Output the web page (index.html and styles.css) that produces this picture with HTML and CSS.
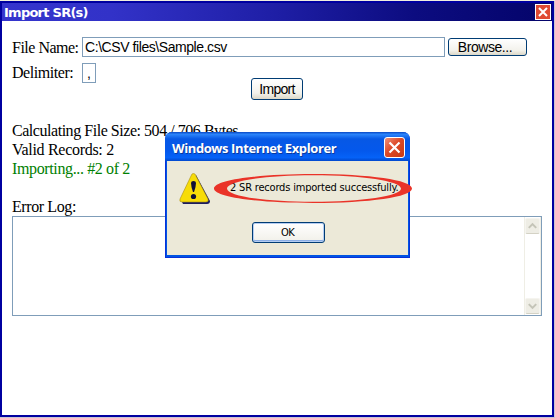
FILE: index.html
```html
<!DOCTYPE html>
<html lang="en">
<head>
<meta charset="utf-8">
<title>Import SR(s)</title>
<link rel="stylesheet" href="styles.css">
</head>
<body>
<main class="window">
  <header class="titlebar">
    <h1 class="title">Import SR(s)</h1>
    <button class="close" aria-label="Close"><svg width="14" height="14" viewBox="0 0 14 14"><path d="M3 3l8 8M11 3l-8 8" stroke="#fff" stroke-width="2"/></svg></button>
  </header>
  <div class="content">
    <div class="row file-row">
      <span class="label"><span class="t-file">File Name:</span></span>
      <div class="field path"><span class="t-path">C:\CSV files\Sample.csv</span></div>
      <button class="btn browse"><span class="t-browse">Browse...</span></button>
    </div>
    <div class="row delimiter-row">
      <span class="label"><span class="t-delim">Delimiter:</span></span>
      <div class="field delimiter">,</div>
      <button class="btn import"><span class="t-import">Import</span></button>
    </div>
    <div class="status">
      <p><span class="t-size">Calculating File Size: 504 / 706 Bytes</span></p>
      <p><span class="t-valid">Valid Records: 2</span></p>
      <p class="progress"><span class="t-progress">Importing... #2 of 2</span></p>
    </div>
    <p class="log-label"><span class="t-log">Error Log:</span></p>
    <div class="log">
      <div class="scrollbar">
        <div class="arrow"><svg width="13" height="14" viewBox="0 0 14 14"><path d="M3 9l4-4 4 4" fill="none" stroke="#c4c4b8" stroke-width="2.2"/></svg></div>
        <div class="arrow"><svg width="13" height="14" viewBox="0 0 14 14"><path d="M3 5l4 4 4-4" fill="none" stroke="#c4c4b8" stroke-width="2.2"/></svg></div>
      </div>
    </div>
  </div>
</main>
<section class="dialog">
  <header class="dialog-title">
    <h2 class="t-dialog">Windows Internet Explorer</h2>
    <button class="dialog-close" aria-label="Close"><svg width="19" height="19" viewBox="0 0 19 19"><path d="M4.5 4.500l10 10M14.500 4.500l-10 10" stroke="#fff" stroke-width="2.2"/></svg></button>
  </header>
  <div class="dialog-body">
    <div class="message">
      <svg class="warning" width="32" height="32" viewBox="0 0 32 32">
        <path d="M17 2L31 28Q31 31 28 31H4L3 29Z" fill="#1c1c60"/>
        <path d="M13 1Q14 0 16 1L29 26Q30 29 27 29H3Q0 29 1 26L12 3Z" fill="#f7dc08" stroke="#a98f10" stroke-width=".6"/>
        <path d="M12 10Q12 8 14.500 8Q17 8 17 10Q17 14 15 19H14Q12 14 12 10Z" fill="#101038"/>
        <circle cx="14.500" cy="23.500" r="2.600" fill="#101038"/>
      </svg>
      <p class="t-message">2 SR records imported successfully.</p>
    </div>
    <button class="ok"><span class="t-ok">OK</span></button>
  </div>
  <svg class="ring" width="198" height="29" viewBox="0 0 198 29"><path fill="#ea3328" fill-rule="evenodd" d="M0 14.500C0 6 43 0 99 0S198 6 198 14.500S155 29 99 29S0 23 0 14.500ZM13 14.500C13 22 50 27.800 99 27.800S187 22 187 14.500S148 1.200 99 1.200S13 7 13 14.500Z"/></svg>
</section>
</body>
</html>
```

FILE: styles.css
```css
* { box-sizing: border-box; }
body {
  margin: 0;
  width: 555px;
  height: 418px;
  padding: 1px 1px 1px 0;
  overflow: hidden;
  background: linear-gradient(#f1efdc 0 1px, #c8c5d4 1px);
  font: 16px/19px "Liberation Serif", serif;
  color: #000;
}
h1, h2, p { margin: 0; }
span, h1, h2, p { white-space: nowrap; }
button { padding: 0; font: inherit; color: inherit; }
svg { display: block; }
.window { height: 416px; border: 2px solid #0000a0; background: #fff; }
.titlebar {
  height: 18px;
  display: flex;
  align-items: center;
  justify-content: space-between;
  padding: 0 1px 0 2px;
  background: linear-gradient(90deg, #3535cd 0, #3232c8 20%, #1e1ea5 50%, #0c0c80 75%, #04046a 100%);
}
.title { padding-top: 1px; font: bold 13px/18px "DejaVu Sans", sans-serif; letter-spacing: -.75px; color: #fff; }
.close { width: 16px; height: 16px; border: 1px solid #fff; background: #e04a32; }
.content { padding: 16px 10px 0; }
.row { display: flex; align-items: flex-start; }
.label { width: 70px; flex: none; line-height: 22px; }
.t-file { letter-spacing: -.5px; }
.t-delim { letter-spacing: -.45px; }
.t-path { letter-spacing: -.43px; }
.t-browse { letter-spacing: -.45px; }
.t-import { letter-spacing: -.7px; }
.t-size { letter-spacing: -.46px; }
.t-valid { letter-spacing: -.3px; }
.t-progress { letter-spacing: -.37px; }
.t-log { letter-spacing: -.4px; }
.field {
  height: 20px;
  border: 1px solid #7f9db9;
  padding-left: 2px;
  font: 14px/19px "Liberation Sans", sans-serif;
}
.path { width: 363px; }
.delimiter { width: 14px; padding-left: 4px; }
.btn {
  border: 1px solid #003c74;
  border-radius: 3px;
  background: linear-gradient(#fff, #f3f2ec 70%, #dcd8c8);
  font-family: "Liberation Sans", sans-serif;
  font-size: 14px;
}
.browse { width: 79px; height: 18px; margin: 1px 0 0 3px; line-height: 16px; padding-right: 5px; }
.delimiter-row { margin-top: 6px; height: 58px; }
.file-row { height: 20px; }
.delimiter-row .label { line-height: 19px; }
.import { width: 52px; height: 22px; margin: 15px 0 0 155px; line-height: 19px; }
.progress { color: #008000; }
.log-label { margin-top: 19px; }
.log { height: 100px; width: 530px; border: 1px solid #7f9db9; display: flex; justify-content: flex-end; }
.scrollbar {
  width: 17px;
  border: solid #efeee5;
  border-width: 0 1px;
  padding: 1px 0;
  display: flex;
  flex-direction: column;
  justify-content: space-between;
}
.arrow { width: 15px; height: 16px; border: 1px solid #f5f4ef; border-bottom-color: #d4d2c5; border-radius: 2px; background: #eeede5; }
.dialog {
  position: absolute;
  left: 165px;
  top: 132px;
  width: 245px;
  height: 126px;
  border-radius: 7px 7px 0 0;
  background: #0054e3;
  border: solid #0831d9;
  border-width: 0 1px 1px;
  padding: 0 1px 2px;
}
.dialog-title {
  height: 29px;
  margin: 0 -2px;
  padding: 2px 5px 0 7px;
  display: flex;
  align-items: center;
  justify-content: space-between;
  border-radius: 7px 7px 0 0;
  background: linear-gradient(#0847c4, #2b84fa 8%, #0758e5 24%, #0458ec 65%, #0562f7 88%, #0148cd);
}
.t-dialog { font: bold 13px/20px "Open Sans", sans-serif; letter-spacing: -.4px; color: #fff; text-shadow: 1px 1px #0a3a9e; }
.dialog-close { width: 21px; height: 21px; border: 1px solid #fff; border-radius: 3px; background: linear-gradient(135deg, #ef9078, #dd4a28 45%, #c83a14); }
.dialog-body { height: 94px; background: #ece9d8; padding: 12px 0 0 12px; }
.message { display: flex; align-items: flex-start; }
.t-message { margin: 6px 0 0 19px; font: 11px/18px "DejaVu Sans Condensed", "DejaVu Sans", sans-serif; letter-spacing: -.19px; }
.ok {
  display: block;
  width: 73px;
  height: 21px;
  margin: 17px 0 0 73px;
  border: 1px solid #003c74;
  border-radius: 3px;
  background: linear-gradient(#fff, #f1f0e9);
  box-shadow: inset 0 0 0 1px #b5cdf2, inset 0 -2px #8baee6;
  font: 11px/19px "DejaVu Sans Condensed", "DejaVu Sans", sans-serif;
}
.t-ok { letter-spacing: -.6px; padding-right: 2px; }
.ring { position: absolute; left: 48px; top: 42px; }
```
